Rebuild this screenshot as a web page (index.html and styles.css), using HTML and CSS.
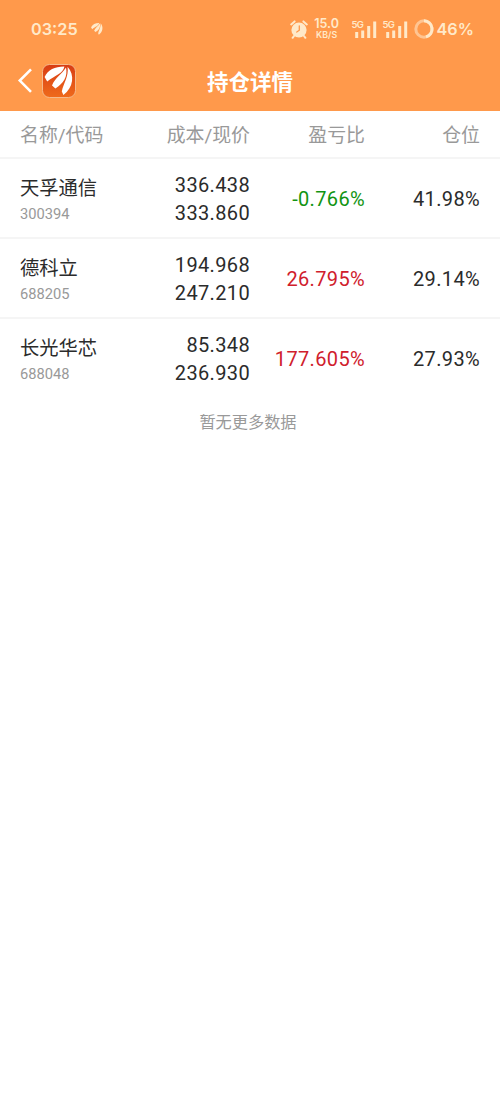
FILE: index.html
```html
<!DOCTYPE html>
<html lang="zh-CN">

<head>
    <meta charset="UTF-8">
    <meta name="viewport" content="width=device-width, initial-scale=1.0">
    <title>持仓详情</title>
    <link rel="stylesheet" href="styles.css">
</head>

<body>
    <header>
        <div class="status-bar">
            <span class="time">03:25</span>
            <svg class="app-notice" width="14" height="14" viewBox="0 0 34 34">
                <path d="M2.6 13C6 6 13 2.5 22.4 2.6C21 9.5 13.5 11.5 5.2 17.4Z" />
                <path d="M10 21.5C13 13.5 19.5 10.5 24 3.4C26 12.5 21.5 19 13.4 24.4Z" />
                <path d="M19.8 27.5C21.5 19 26.8 13 25.6 2.8C33 11 31.5 23.5 21.4 31Z" />
            </svg>
            <div class="status-right">
                <svg class="alarm" width="18" height="19" viewBox="0 0 18 19">
                    <circle cx="9" cy="10" r="7.6" />
                    <path class="bells" d="M1.2 4.4L4.6 1.4M16.8 4.4L13.4 1.4M4 16l-1.4 1.8M14 16l1.4 1.8" />
                    <path class="hands" d="M9.3 5.8V10.2L6.8 12" />
                </svg>
                <div class="speed">
                    <span class="speed-value">15.0</span>
                    <span class="speed-unit">KB/S</span>
                </div>
                <div class="signal">
                    <span class="network">5G</span>
                    <svg width="22" height="17" viewBox="0 0 22 17">
                        <path d="M1.7 11V17M7.7 9.5V17M13.7 5V17M19.7 0.5V17" />
                    </svg>
                </div>
                <div class="signal">
                    <span class="network">5G</span>
                    <svg width="22" height="17" viewBox="0 0 22 17">
                        <path d="M1.7 11V17M7.7 9.5V17M13.7 5V17M19.7 0.5V17" />
                    </svg>
                </div>
                <svg class="battery" width="20" height="20" viewBox="0 0 20 20">
                    <circle class="battery-track" cx="10" cy="10" r="8.2" />
                    <path class="battery-level" d="M10 1.8A8.2 8.2 0 0 1 12 17.9" />
                </svg>
                <span class="battery-text">46%</span>
            </div>
        </div>
        <div class="title-bar">
            <div class="title-left">
                <svg class="back" width="16" height="26" viewBox="0 0 16 26">
                    <path d="M14 1.4L2.8 12.6L14 23.8" />
                </svg>
                <svg class="logo" width="34" height="34" viewBox="0 0 34 34">
                    <defs>
                        <linearGradient id="logoFill" x1="0" y1="0" x2="0" y2="1">
                            <stop offset="0" stop-color="#d83c14" />
                            <stop offset="1" stop-color="#ef6a1b" />
                        </linearGradient>
                    </defs>
                    <rect x="0.5" y="0.5" width="33" height="33" rx="7" />
                    <path d="M2.6 13C6 6 13 2.5 22.4 2.6C21 9.5 13.5 11.5 5.2 17.4Z" />
                    <path d="M10 21.5C13 13.5 19.5 10.5 24 3.4C26 12.5 21.5 19 13.4 24.4Z" />
                    <path d="M19.8 27.5C21.5 19 26.8 13 25.6 2.8C33 11 31.5 23.5 21.4 31Z" />
                </svg>
            </div>
            <h1>持仓详情</h1>
            <div></div>
        </div>
    </header>

    <main>
        <div class="row table-head">
            <span>名称/代码</span>
            <span>成本/现价</span>
            <span>盈亏比</span>
            <span>仓位</span>
        </div>
        <div class="row stock">
            <div class="name">天孚通信<small>300394</small></div>
            <div class="price">336.438<br>333.860</div>
            <div class="ratio down">-0.766%</div>
            <div class="position">41.98%</div>
        </div>
        <div class="row stock">
            <div class="name">德科立<small>688205</small></div>
            <div class="price">194.968<br>247.210</div>
            <div class="ratio up">26.795%</div>
            <div class="position">29.14%</div>
        </div>
        <div class="row stock">
            <div class="name">长光华芯<small>688048</small></div>
            <div class="price">85.348<br>236.930</div>
            <div class="ratio up">177.605%</div>
            <div class="position">27.93%</div>
        </div>
        <p class="no-more">暂无更多数据</p>
    </main>
</body>

</html>
```
FILE: styles.css
```css
* {
    box-sizing: border-box;
}

body {
    margin: 0;
    min-height: 100vh;
    background-color: #fff;
    color: #2b2b2b;
    font-family: Roboto, "Noto Sans CJK SC", sans-serif;
}

header {
    height: 111px;
    background-color: #ff994b;
    color: #fff;
}

svg {
    display: block;
    flex-shrink: 0;
}

/* Phone status bar */
.status-bar {
    display: flex;
    align-items: center;
    height: 56px;
    padding: 2px 26px 0 31px;
    color: #ffe9c9;
    font-family: Inter, sans-serif;
}

.time {
    width: 59px;
    font-size: 16.3px;
    font-weight: 600;
}

.app-notice {
    fill: #ffe9c9;
}

.status-right {
    display: flex;
    align-items: center;
    margin-left: auto;
}

.alarm {
    margin-right: 6px;
    fill: #ffe9c9;
}

.alarm path {
    fill: none;
    stroke: #ffe9c9;
    stroke-width: 2;
    stroke-linecap: round;
}

.alarm .hands {
    stroke: #ff994b;
    stroke-width: 1.3;
}

.speed {
    display: flex;
    flex-direction: column;
    align-items: center;
    width: 26px;
    margin-right: 12px;
    font-weight: 600;
}

.speed-value {
    font-size: 12.5px;
    line-height: 10px;
}

.speed-unit {
    margin-top: 1px;
    font-size: 8.8px;
    line-height: 9px;
}

.signal {
    position: relative;
    width: 25px;
    margin-right: 6px;
    padding-left: 3px;
}

.signal path {
    stroke: #ffe9c9;
    stroke-width: 3;
}

.network {
    position: absolute;
    top: -1px;
    left: 0;
    font-size: 9.5px;
    line-height: 9px;
    font-weight: 600;
    letter-spacing: -0.8px;
}

.battery {
    margin: 0 3px 0 0;
    fill: none;
    stroke-width: 3;
}

.battery-track {
    stroke: #ffc592;
}

.battery-level {
    stroke: #ffe9c9;
}

.battery-text {
    font-size: 16.2px;
    font-weight: 600;
}

/* Page title */
.title-bar {
    display: grid;
    grid-template-columns: 1fr auto 1fr;
    align-items: center;
    height: 50px;
    padding: 0 17px;
}

.title-left {
    display: flex;
    align-items: center;
    gap: 9px;
}

.back {
    fill: none;
    stroke: #fff;
    stroke-width: 2.6;
}

.logo {
    fill: #fff;
}

.logo rect {
    fill: url(#logoFill);
    stroke: #f5b98b;
    stroke-width: 1;
}

h1 {
    margin: 0;
    padding-top: 3px;
    font-size: 21.5px;
    line-height: 30px;
    font-weight: 700;
}

/* Positions table */
.row {
    display: grid;
    grid-template-columns: 130px 100px 115px 115px;
    align-items: center;
    padding: 0 20px;
    text-align: right;
    border-bottom: 2px solid #f5f5f5;
}

.row > :first-child {
    text-align: left;
}

.table-head {
    height: 48px;
    padding-bottom: 1px;
    color: #999;
    font-size: 18.9px;
}

.stock {
    height: 80px;
    padding-top: 2px;
    font-size: 20px;
    letter-spacing: 0.35px;
}

.stock:nth-child(4) {
    padding-top: 0;
    border-bottom: none;
}

.name {
    padding-top: 4px;
    font-size: 19.3px;
    line-height: 26px;
    letter-spacing: 0;
}

.name small {
    display: block;
    color: #999;
    font-size: 14.7px;
    line-height: 24px;
}

.price {
    line-height: 28px;
}

.up {
    color: #d0202c;
}

.down {
    color: #129412;
}

.no-more {
    margin: 12px 0 0;
    padding-right: 4px;
    color: #999;
    font-size: 16.2px;
    line-height: 24px;
    text-align: center;
}
```
